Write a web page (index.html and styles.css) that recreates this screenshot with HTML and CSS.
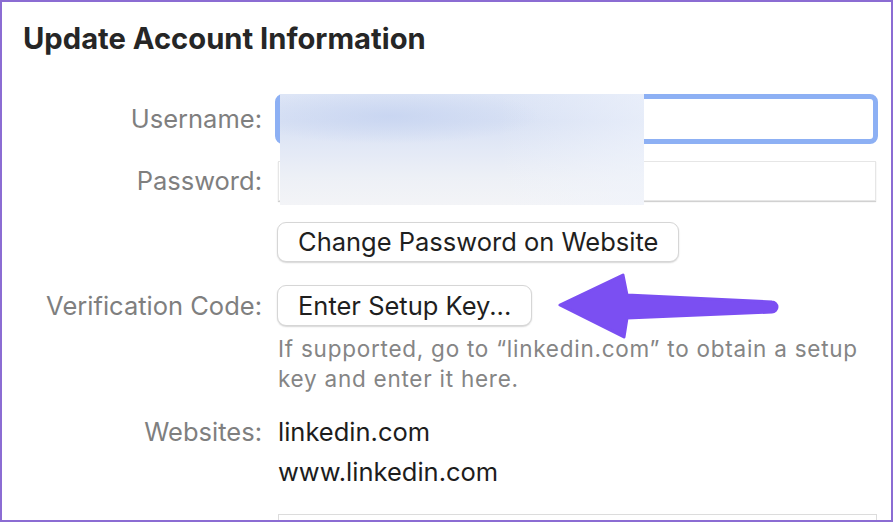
FILE: index.html
```html
<!DOCTYPE html>
<html lang="en">
<head>
<meta charset="utf-8">
<title>Update Account Information</title>
<link rel="stylesheet" href="styles.css">
</head>
<body>
<div class="frame">
  <h1 class="title">Update Account Information</h1>
  <div class="form">
    <div class="row row-user">
      <div class="label">Username:</div>
      <div class="field field-focus"></div>
    </div>
    <div class="row row-pass">
      <div class="label">Password:</div>
      <div class="field field-plain"></div>
    </div>
    <div class="row row-change">
      <div class="label"></div>
      <button class="btn">Change Password on Website</button>
    </div>
    <div class="row row-verify">
      <div class="label">Verification Code:</div>
      <button class="btn">Enter Setup Key...</button>
    </div>
    <div class="row row-help">
      <div class="label"></div>
      <p class="help">If supported, go to “linkedin.com” to obtain a setup key and enter it here.</p>
    </div>
    <div class="row row-sites">
      <div class="label">Websites:</div>
      <div class="sites">
        <div>linkedin.com</div>
        <div>www.linkedin.com</div>
      </div>
    </div>
    <div class="row row-notes">
      <div class="label"></div>
      <div class="field field-notes"></div>
    </div>
  </div>
  <div class="redact"></div>
  <svg class="arrow" width="225" height="72" viewBox="0 0 225 72" aria-hidden="true">
    <path d="M5 35 L68 5 L72 25 L217 32 A5 5 0 0 1 217 42 L72 48 L69 67 Z" fill="#7b4ff2" stroke="#7b4ff2" stroke-width="3" stroke-linejoin="round"/>
  </svg>
</div>
</body>
</html>
```

FILE: styles.css
```css
html, body {
  margin: 0;
  padding: 0;
  background: #ffffff;
}

.frame {
  position: relative;
  box-sizing: border-box;
  width: 893px;
  height: 522px;
  border: 2px solid #8b6cd3;
  padding-top: 19px;
  overflow: hidden;
  background: #ffffff;
  font-family: "Inter", "Liberation Sans", sans-serif;
}

.title {
  margin: 0 0 0 21px;
  font-size: 29.2px;
  line-height: 36px;
  font-weight: 700;
  color: #262626;
}

.form {
  display: flex;
  flex-direction: column;
}

.row {
  display: flex;
  align-items: center;
  gap: 16px;
}

.label {
  flex: 0 0 260px;
  text-align: right;
  font-size: 25.5px;
  line-height: 30px;
  color: #7f7f7f;
}

.row-user { margin-top: 37px; }
.row-pass { margin-top: 17px; }
.row-change { margin-top: 21px; }
.row-verify { margin-top: 23px; }
.row-help { margin-top: 8px; align-items: flex-start; }
.row-sites { margin-top: 18px; align-items: baseline; }
.row-notes { margin-top: 22px; }

.field {
  box-sizing: border-box;
  background: #ffffff;
}

.field-focus {
  margin-left: -3px;
  width: 603px;
  height: 50px;
  border: 5px solid #8db0f4;
  border-radius: 8px;
}

.field-plain {
  width: 598px;
  height: 40px;
  border: 1px solid #e6e6e6;
  box-shadow: 0 1px 1px rgba(0, 0, 0, 0.18);
}

.field-notes {
  width: 599px;
  height: 40px;
  border: 1px solid #dcdcdc;
  border-bottom: none;
}

.btn {
  box-sizing: border-box;
  height: 40px;
  margin-left: -1px;
  padding: 0 20px;
  border: 1px solid #d6d6d6;
  border-radius: 9px;
  background: #ffffff;
  box-shadow: 0 1px 1.5px rgba(0, 0, 0, 0.16);
  font-family: inherit;
  font-size: 25.5px;
  line-height: 38px;
  color: #1f1f1f;
  white-space: nowrap;
}

.row-verify .btn { height: 41px; }

.help {
  margin: 0;
  width: 590px;
  font-size: 22.5px;
  letter-spacing: 0.75px;
  line-height: 30px;
  color: #858585;
}

.sites {
  font-size: 25.5px;
  line-height: 40px;
  color: #1d1d1d;
}

.redact {
  position: absolute;
  left: 278px;
  top: 92px;
  width: 364px;
  height: 111px;
  background:
    radial-gradient(ellipse 150px 28px at 110px 22px, rgba(196, 210, 240, 0.75), rgba(196, 210, 240, 0) 100%),
    linear-gradient(90deg, rgba(255, 255, 255, 0) 60%, rgba(240, 244, 252, 0.6) 100%),
    linear-gradient(180deg, #dde5f6 0%, #d8e1f4 25%, #e3e9f6 50%, #edf0f6 75%, #f3f4f7 100%);
}

.arrow {
  position: absolute;
  left: 553px;
  top: 268px;
}
```
